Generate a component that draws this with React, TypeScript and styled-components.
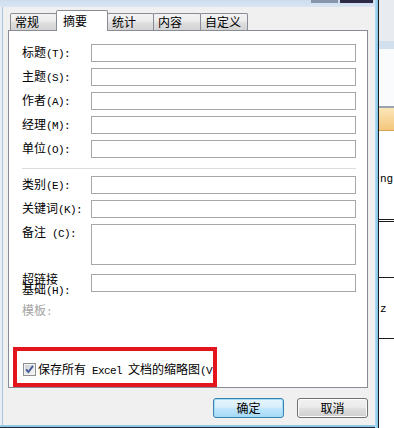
import React from "react";
import styled, { createGlobalStyle } from "styled-components";

const Global = createGlobalStyle`
  html, body { margin: 0; padding: 0; background: #ffffff; }
  body {
    width: 394px; height: 428px; overflow: hidden;
    font-family: "Noto Sans CJK SC", "Noto Sans", sans-serif;
    font-size: 12px; color: #000;
  }
  * { box-sizing: border-box; }
`;

const Screen = styled.div`
  display: flex;
  width: 394px;
  height: 428px;
`;

const Dialog = styled.div`
  width: 379px;
  height: 428px;
  display: flex;
  flex: none;
`;

const Main = styled.div`
  width: 375px;
  display: flex;
  flex-direction: column;
  background: #e6eef7;
`;

const RightFrame = styled.div`
  width: 4px;
  background: linear-gradient(to right, #b5def3 0, #7dc1e7 3px, #1c1c1c 3px);
`;

const TitleStrip = styled.div`
  height: 7px;
  flex: none;
  background: linear-gradient(#cddced, #d9e5f2);
  display: flex;
  justify-content: flex-end;
  align-items: flex-start;
  gap: 2px;
  padding-right: 2px;
`;

const CaptionBtn = styled.div<{ $w: number; $tone: string }>`
  width: ${(p) => p.$w}px;
  height: 3px;
  background: ${(p) => p.$tone};
`;

const Body = styled.div`
  flex: 1;
  margin-left: 2px;
  border-left: 1px solid #b0c5db;
  background: #f0f0f0;
  padding: 3px 7px 0 5px;
  display: flex;
  flex-direction: column;
`;

const BottomFrame = styled.div`
  height: 3px;
  flex: none;
  background: linear-gradient(#9ccde6 0, #86c1df 2px, #1e2a36 2px);
`;

const TabRow = styled.div`
  display: flex;
  align-items: flex-end;
  height: 20px;
  padding-left: 2px;
  position: relative;
  z-index: 2;
`;

const Tab = styled.div<{ $w: number; $active?: boolean }>`
  width: ${(p) => p.$w}px;
  height: ${(p) => (p.$active ? 21 : 17)}px;
  margin-left: -1px;
  margin-bottom: ${(p) => (p.$active ? -1 : 0)}px;
  border: 1px solid #898c95;
  border-bottom: none;
  border-radius: 2px 2px 0 0;
  background: ${(p) =>
    p.$active
      ? "#ffffff"
      : "linear-gradient(#f3f3f3 0%, #ececec 45%, #dedede 55%, #d3d3d3 100%)"};
  padding: ${(p) => (p.$active ? "2px 0 0 6px" : "0 0 0 4px")};
  line-height: 16px;
  white-space: nowrap;
  position: relative;
  z-index: ${(p) => (p.$active ? 3 : 1)};
  &:first-child { margin-left: 0; }
`;

const Panel = styled.div`
  width: 360px;
  height: 358px;
  flex: none;
  border: 1px solid #898c95;
  background: #ffffff;
  display: flex;
  flex-direction: column;
`;

const Fields = styled.div`
  padding: 13px 11px 0 13px;
  display: flex;
  flex-direction: column;
`;

const Group = styled.div`
  display: flex;
  flex-direction: column;
  gap: 6px;
`;

const Row = styled.div<{ $top?: number }>`
  display: grid;
  grid-template-columns: 69px 265px;
  margin-top: ${(p) => p.$top ?? 0}px;
`;

const Label = styled.div<{ $lh?: number; $top?: boolean }>`
  align-self: ${(p) => (p.$top ? "start" : "center")};
  margin-top: ${(p) => (p.$top ? 1 : 0)}px;
  line-height: ${(p) => p.$lh ?? 14}px;
  white-space: nowrap;
`;

const Ascii = styled.span`
  font-family: "Liberation Mono", "DejaVu Sans Mono", monospace;
  font-size: 11px;
  letter-spacing: -0.6px;
  white-space: pre;
`;

const Field = styled.div<{ $h?: number }>`
  height: ${(p) => p.$h ?? 18}px;
  border: 1px solid #a7a7a7;
  background: #ffffff;
`;

const Divider = styled.div`
  height: 1px;
  margin: 10px 0 7px 0;
  background: #dcdcdc;
`;

const Muted = styled.div`
  margin-top: 7px;
  line-height: 14px;
  color: #a3a3a3;
`;

const Annot = styled.div`
  margin-top: auto;
  margin-left: 4px;
  width: 204px;
  height: 40px;
  border: 4px solid #e3141b;
  overflow: hidden;
  display: flex;
  align-items: center;
  gap: 2px;
  padding: 5px 0 0 6px;
`;

const CheckText = styled.span`
  line-height: 14px;
  white-space: nowrap;
`;

const ButtonRow = styled.div`
  display: flex;
  justify-content: flex-end;
  gap: 13px;
  margin-top: 10px;
  width: 360px;
`;

const Button = styled.div<{ $primary?: boolean }>`
  width: 71px;
  height: 20px;
  border: 1px solid ${(p) => (p.$primary ? "#3c7fb1" : "#707070")};
  border-radius: 3px;
  background: ${(p) =>
    p.$primary
      ? "linear-gradient(#e6f4fc 0%, #d8eefb 45%, #bee6fd 55%, #a7d9f5 100%)"
      : "linear-gradient(#f2f2f2 0%, #ebebeb 45%, #dddddd 55%, #cfcfcf 100%)"};
  box-shadow: inset 0 0 0 1px ${(p) => (p.$primary ? "#9fe0f8" : "#fcfcfc")};
  display: flex;
  align-items: center;
  justify-content: center;
  line-height: 14px;
`;

const BgWindow = styled.div`
  width: 15px;
  flex: none;
  display: flex;
  flex-direction: column;
  background: #ffffff;
  overflow: hidden;
`;

const BgBand = styled.div<{ $h: number; $bg: string }>`
  height: ${(p) => p.$h}px;
  flex: none;
  background: ${(p) => p.$bg};
`;

const BgCell = styled.div<{ $h: number; $line: string; $pad?: number }>`
  height: ${(p) => p.$h}px;
  flex: none;
  border-bottom: ${(p) => p.$line};
  padding: ${(p) => p.$pad ?? 0}px 0 0 1px;
  font-family: "Liberation Mono", "DejaVu Sans Mono", monospace;
  font-size: 11px;
  line-height: 14px;
  white-space: nowrap;
`;

const CheckBox = () => (
  <svg width="13" height="13" viewBox="0 0 13 13" style={{ flex: "none" }}>
    <defs>
      <linearGradient id="cbg" x1="0" y1="0" x2="1" y2="1">
        <stop offset="0" stopColor="#cbcfd5" />
        <stop offset="1" stopColor="#f7f7f7" />
      </linearGradient>
    </defs>
    <rect x="0.5" y="0.5" width="12" height="12" fill="#f4f4f4" stroke="#8e8f8f" />
    <rect x="2" y="2" width="9" height="9" fill="url(#cbg)" />
    <path d="M3 6.3 L5.4 9 L10 2.8" stroke="#4a5f97" strokeWidth="2" fill="none" />
  </svg>
);

const tabs = [
  { t: "常规", w: 47 },
  { t: "摘要", w: 52, active: true },
  { t: "统计", w: 47 },
  { t: "内容", w: 48 },
  { t: "自定义", w: 48 },
];

const topRows = [
  ["标题", "(T):"],
  ["主题", "(S):"],
  ["作者", "(A):"],
  ["经理", "(M):"],
  ["单位", "(O):"],
];

export default function App() {
  return (
    <>
      <Global />
      <Screen>
        <Dialog>
          <Main>
            <TitleStrip>
              <CaptionBtn $w={27} $tone="#8796aa" />
              <CaptionBtn $w={33} $tone="#2c2a44" />
            </TitleStrip>
            <Body>
              <TabRow>
                {tabs.map((tb) => (
                  <Tab key={tb.t} $w={tb.w} $active={tb.active}>
                    {tb.t}
                  </Tab>
                ))}
              </TabRow>
              <Panel>
                <Fields>
                  <Group>
                    {topRows.map(([cn, key]) => (
                      <Row key={cn}>
                        <Label>
                          {cn}
                          <Ascii>{key}</Ascii>
                        </Label>
                        <Field />
                      </Row>
                    ))}
                  </Group>
                  <Divider />
                  <Group>
                    <Row>
                      <Label>
                        类别<Ascii>(E):</Ascii>
                      </Label>
                      <Field />
                    </Row>
                    <Row>
                      <Label>
                        关键词<Ascii>(K):</Ascii>
                      </Label>
                      <Field />
                    </Row>
                    <Row>
                      <Label $top>
                        备注<Ascii> (C):</Ascii>
                      </Label>
                      <Field $h={41} />
                    </Row>
                    <Row $top={3}>
                      <Label $lh={10}>
                        超链接
                        <br />
                        基础<Ascii>(H):</Ascii>
                      </Label>
                      <Field />
                    </Row>
                  </Group>
                  <Muted>
                    模板<Ascii>:</Ascii>
                  </Muted>
                </Fields>
                <Annot>
                  <CheckBox />
                  <CheckText>
                    保存所有<Ascii> Excel </Ascii>文档的缩略图<Ascii>(V)</Ascii>
                  </CheckText>
                </Annot>
              </Panel>
              <ButtonRow>
                <Button $primary>确定</Button>
                <Button>取消</Button>
              </ButtonRow>
            </Body>
            <BottomFrame />
          </Main>
          <RightFrame />
        </Dialog>
        <BgWindow>
          <BgBand $h={41} $bg="#e8ecf1" />
          <BgBand $h={8} $bg="#d2dfec" />
          <BgBand $h={57} $bg="#fafbfc" />
          <BgBand $h={2} $bg="#99a4b0" />
          <BgBand $h={22} $bg="linear-gradient(#fbe6b8, #f5c67c)" />
          <BgBand $h={1} $bg="#d2a65a" />
          <BgCell $h={91} $line="3px double #1a1a1a" $pad={41}>
            ng
          </BgCell>
          <BgCell $h={56} $line="1px solid #1a1a1a" />
          <BgCell $h={61} $line="1px solid #1a1a1a" $pad={24}>
            z
          </BgCell>
        </BgWindow>
      </Screen>
    </>
  );
}
